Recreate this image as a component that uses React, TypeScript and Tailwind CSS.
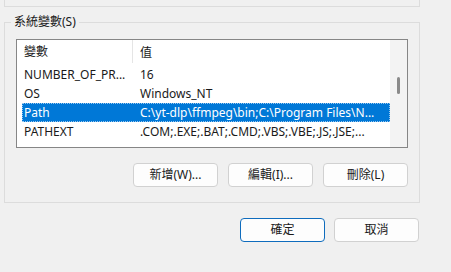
import React from 'react'

const FONT = { fontFamily: '"Noto Sans", "Noto Sans CJK TC", sans-serif' }

const ROWS = [
  { name: 'NUMBER_OF_PR...', value: '16' },
  { name: 'OS', value: 'Windows_NT' },
  { name: 'Path', value: 'C:\\yt-dlp\\ffmpeg\\bin;C:\\Program Files\\N...', selected: true },
  { name: 'PATHEXT', value: '.COM;.EXE;.BAT;.CMD;.VBS;.VBE;.JS;.JSE;...' },
]

function Btn({ label, primary }: { label: string; primary?: boolean }) {
  return (
    <button
      className={
        primary
          ? 'w-[85px] h-[24px] rounded-[4px] border border-[#0f6cbd] bg-[#fdfdfd] text-[12px] text-[#1a1a1a] leading-none'
          : 'w-[85px] h-[24px] rounded-[4px] border border-[#d1d1d1] bg-[#fdfdfd] text-[12px] text-[#1a1a1a] leading-none'
      }
    >
      {label}
    </button>
  )
}

export default function App() {
  return (
    <div className="w-[451px] h-[272px] bg-[#f0f0f0] overflow-hidden text-[#1a1a1a]" style={FONT}>
      {/* tail of the user-variables group above */}
      <div className="ml-[4px] w-[416px] h-[7px] border-l border-r border-b border-[#dcdcdc]" />

      {/* system variables group */}
      <div className="relative ml-[4px] mt-[15px] w-[416px] h-[181px] border border-[#dcdcdc] pt-[16px] pl-[11px]">
        <span className="absolute left-[6px] top-[-10px] bg-[#f0f0f0] px-[3px] text-[12px] leading-[18px]">系統變數(S)</span>

        <div className="flex w-[392px] h-[109px] border border-[#868686] bg-white">
          <div className="flex-1 flex flex-col">
            {/* header */}
            <div className="flex h-[25px] items-center text-[12px]">
              <div className="w-[116px] h-[23px] self-start border-r border-[#e5e5e5] pl-[7px] flex items-center">變數</div>
              <div className="pl-[7px]">值</div>
            </div>
            {ROWS.map((r) => (
              <div
                key={r.name}
                className={
                  r.selected
                    ? 'ml-[5px] flex h-[19px] items-center bg-[#0078d7] text-white outline-1 outline-dotted outline-offset-[-1px] outline-[#9cc8ee] text-[12px] whitespace-nowrap'
                    : 'ml-[5px] flex h-[19px] items-center text-[12px] whitespace-nowrap'
                }
              >
                <div className="w-[116px] pl-[2px]">{r.name}</div>
                <div className="pl-[2px]">{r.value}</div>
              </div>
            ))}
          </div>
          {/* scrollbar */}
          <div className="w-[17px] bg-[#f3f3f3] flex justify-center">
            <div className="mt-[37px] w-[3px] h-[17px] rounded-full bg-[#8a8a8a]" />
          </div>
        </div>

        <div className="flex justify-end gap-[10px] w-[392px] mt-[15px]">
          <Btn label="新增(W)..." />
          <Btn label="編輯(I)..." />
          <Btn label="刪除(L)" />
        </div>
      </div>

      <div className="flex justify-end gap-[9px] w-[419px] mt-[15px]">
        <Btn label="確定" primary />
        <Btn label="取消" />
      </div>
    </div>
  )
}
